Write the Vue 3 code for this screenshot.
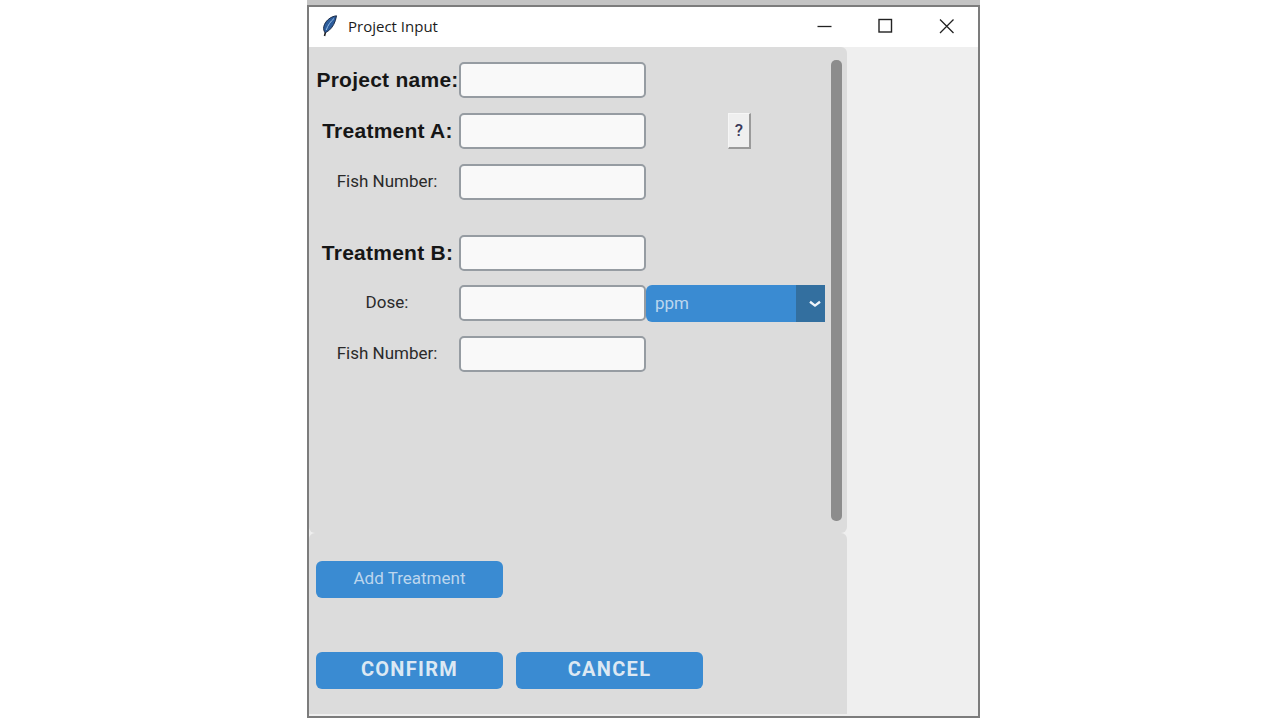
<script setup>
const rows = [
  { label: "Project name:", bold: true },
  { label: "Treatment A:", bold: true, help: true },
  { label: "Fish Number:" },
  { label: "Treatment B:", bold: true, gap: true },
  { label: "Dose:", unit: "ppm", tight: true },
  { label: "Fish Number:" }
]
</script>

<template>
  <div class="page">
    <div class="behind"></div>
    <div class="window">
      <header class="titlebar">
        <svg class="feather" width="16" height="22" viewBox="0 0 16 22">
          <path d="M2.5 21 C3.5 17 4 15 5 12" fill="none" stroke="#222" stroke-width="1.6" />
          <path d="M14.5 0.8 C8 1.5 3 6.5 1.8 11.5 C1.3 14 1.8 16 3.2 17.8 C4.5 16.8 5.5 16.5 6.8 15.6 C10.5 12.5 13.5 7.5 14.5 0.8 Z" fill="#2b5c9c" stroke="#1a2a46" stroke-width="1" />
          <path d="M12 3.5 C8.5 6.5 6 10 4.2 15" fill="none" stroke="#a4c8ee" stroke-width="0.9" />
        </svg>
        <span class="title">Project Input</span>
        <div class="controls">
          <svg width="61" height="16" viewBox="0 0 16 16" class="ctl">
            <path d="M1 8.5H15" stroke="#222" stroke-width="1.3" />
          </svg>
          <svg width="61" height="16" viewBox="0 0 16 16" class="ctl">
            <rect x="1.5" y="1.5" width="12.5" height="12.5" fill="none" stroke="#222" stroke-width="1.4" />
          </svg>
          <svg width="61" height="16" viewBox="0 0 16 16" class="ctl">
            <path d="M1.5 1.5L15 15M15 1.5L1.5 15" stroke="#222" stroke-width="1.3" />
          </svg>
        </div>
      </header>

      <main class="content">
        <div class="panel">
          <section class="scroll-area">
            <div class="form">
              <template v-for="row in rows" :key="row.label + row.gap">
                <label class="label" :class="{ bold: row.bold, tight: row.tight }">{{ row.label }}</label>
                <input class="field" :class="{ tight: row.tight }" type="text" />
                <div class="extra" :class="{ tight: row.tight }">
                  <button v-if="row.help" class="help">?</button>
                  <div v-if="row.unit" class="select">
                    <span class="select-text">{{ row.unit }}</span>
                    <span class="select-arrow">
                      <svg width="14" height="8" viewBox="0 0 14 8">
                        <path d="M2 1.8L7 5.6L12 1.8" fill="none" stroke="#eef4fa" stroke-width="2.4" />
                      </svg>
                    </span>
                  </div>
                </div>
              </template>
            </div>
            <div class="scrollbar"></div>
          </section>

          <section class="actions">
            <button class="btn add">Add Treatment</button>
            <div class="action-row">
              <button class="btn strong">CONFIRM</button>
              <button class="btn strong">CANCEL</button>
            </div>
          </section>
        </div>
      </main>
    </div>
  </div>
</template>

<style>
  body {
    background: #fff;
    overflow: hidden;
  }
</style>

<style scoped>
  .page {
    width: 1280px;
    height: 720px;
    background: #fff;
    padding-left: 307px;
    box-sizing: border-box;
    overflow: hidden;
  }

  .behind {
    width: 673px;
    height: 5px;
    background: #c4c4c4;
  }

  .window {
    width: 673px;
    height: 713px;
    box-sizing: border-box;
    border: 2px solid #7c7c7c;
    background: #fff;
    display: flex;
    flex-direction: column;
  }

  .titlebar {
    height: 40px;
    flex: none;
    display: flex;
    align-items: center;
    padding-left: 13px;
    background: #fff;
  }

  .feather {
    margin-right: 10px;
    margin-top: -2px;
  }

  .title {
    font: 15px "Open Sans", sans-serif;
    color: #1b1b1b;
    margin-top: -2px;
  }

  .controls {
    margin-left: auto;
    margin-right: 1px;
    margin-top: -3px;
    display: flex;
  }

  .ctl {
    display: block;
  }

  .content {
    flex: 1;
    background: #efefef;
    min-height: 0;
  }

  .panel {
    width: 538px;
    height: 100%;
  }

  .scroll-area {
    height: 486px;
    background: #dcdcdc;
    border-radius: 0 6px 6px 6px;
    display: flex;
    box-sizing: border-box;
    padding: 13px 5px 0 0;
  }

  .form {
    flex: 1;
    display: grid;
    grid-template-columns: 150px 187px 1fr;
    grid-template-rows: 36px 36px 36px 56px 35px 36px;
    row-gap: 15px;
    padding-top: 2px;
    align-items: end;
    align-content: start;
  }

  .scrollbar {
    flex: none;
    width: 11px;
    height: 461px;
    border-radius: 5px;
    background: #8c8c8c;
  }

  .label {
    padding-left: 6px;
    white-space: nowrap;
    text-align: center;
    font: 17px/34px Roboto, sans-serif;
    height: 36px;
    color: #2a2a2a;
  }

  .label.bold {
    padding-left: 7px;
    font: bold 21px/36px "Liberation Sans", sans-serif;
    letter-spacing: 0.25px;
    color: #161616;
  }

  .tight {
    align-self: start;
    margin-top: -1px;
  }

  .field {
    box-sizing: border-box;
    width: 187px;
    height: 36px;
    border: 2px solid #969ca2;
    border-radius: 5px;
    background: #f9f9f9;
    outline: none;
    padding: 0;
  }

  .extra {
    height: 36px;
  }

  .help {
    display: block;
    margin-left: 82px;
    width: 23px;
    height: 36px;
    box-sizing: border-box;
    border: 1px solid #f6f6f6;
    border-right: 2px solid #9a9a9a;
    border-bottom: 2px solid #9a9a9a;
    background: #efefef;
    padding: 0 0 2px;
    font: 500 17px Roboto, sans-serif;
    color: #3a3a5a;
  }

  .select {
    width: 179px;
    height: 37px;
    display: flex;
    align-items: stretch;
    background: #3a8bd2;
    border-radius: 6px 0 0 6px;
  }

  .select-text {
    flex: 1;
    padding-left: 9px;
    font: 17px/36px Roboto, sans-serif;
    color: #bcd6ee;
  }

  .select-arrow {
    width: 29px;
    box-sizing: border-box;
    padding-left: 9px;
    background: #336f9f;
    display: flex;
    align-items: center;
    justify-content: center;
  }

  .actions {
    height: 181px;
    background: #dcdcdc;
    border-radius: 6px 6px 0 0;
    box-sizing: border-box;
    padding: 28px 0 0 7px;
  }

  .action-row {
    display: flex;
    gap: 13px;
    margin-top: 54px;
  }

  .btn {
    display: block;
    width: 187px;
    height: 37px;
    border: none;
    border-radius: 6px;
    background: #3a8bd2;
    padding: 0 0 4px;
  }

  .add {
    font: 17px Roboto, sans-serif;
    color: #bcd6ee;
  }

  .strong {
    font: bold 20px Roboto, sans-serif;
    letter-spacing: 1.3px;
    color: #dce8f3;
  }
</style>
